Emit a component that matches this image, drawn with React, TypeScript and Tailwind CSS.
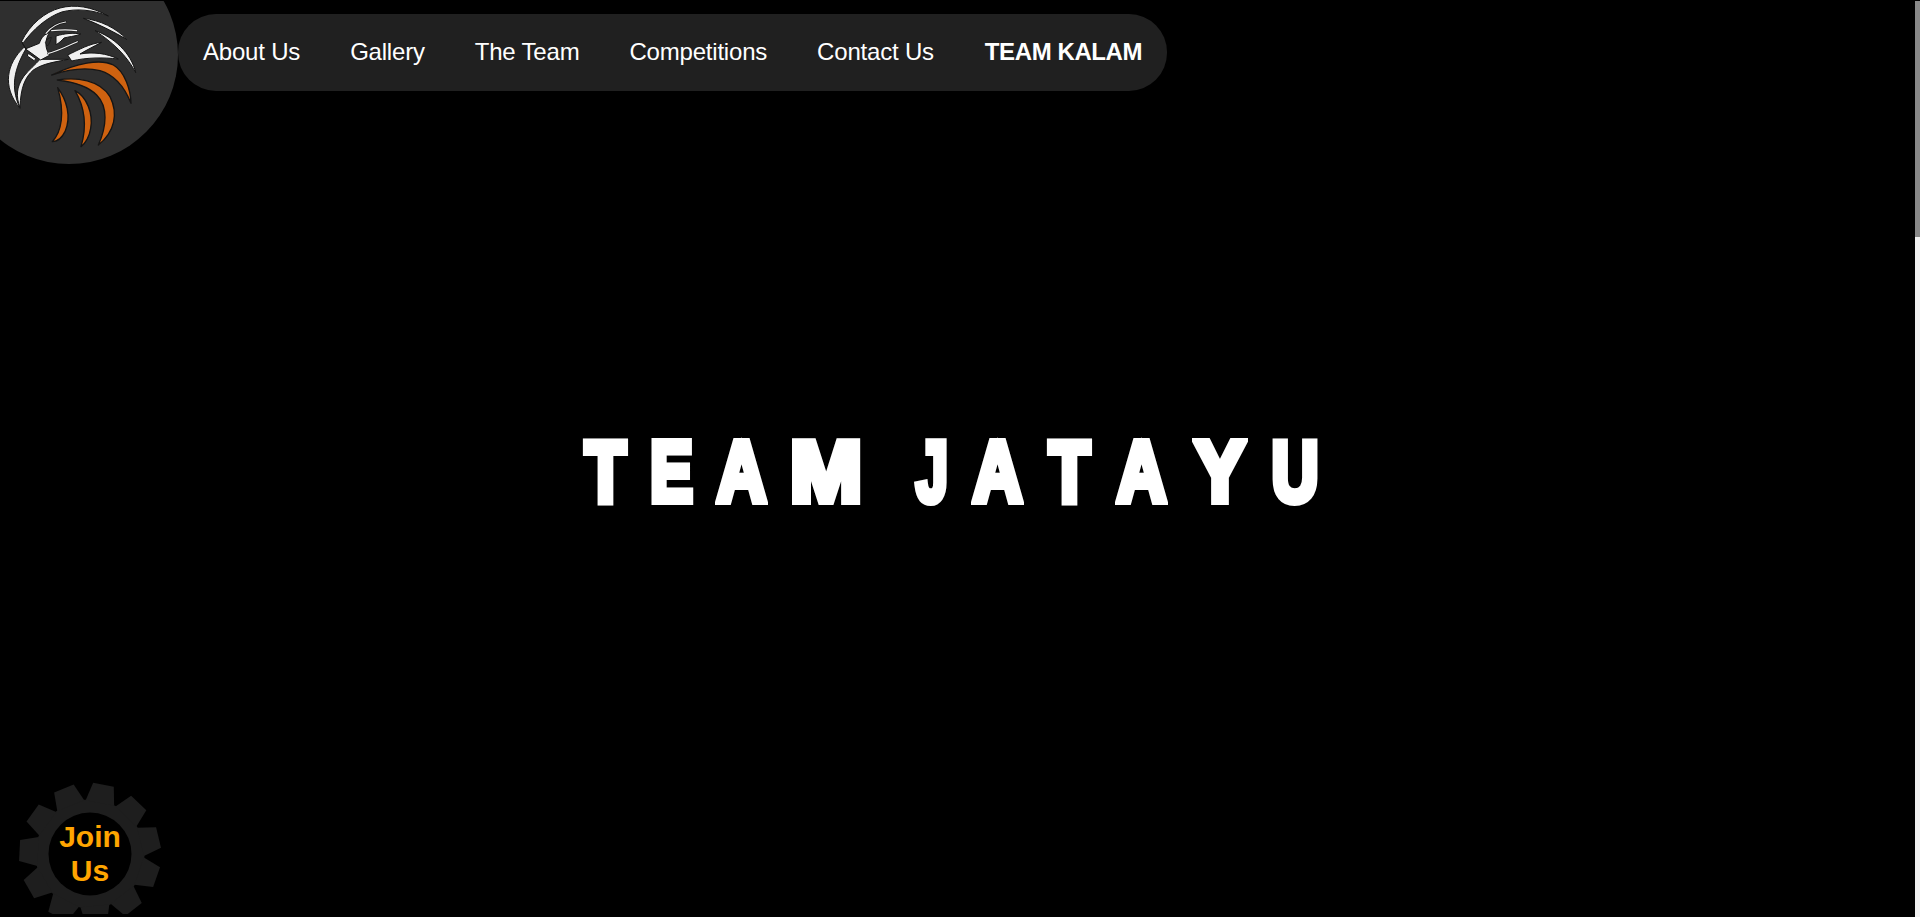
const navLinks = ["About Us", "Gallery", "The Team", "Competitions", "Contact Us"];

const titleLetters = [
  { ch: "T", box: "w-[47px]", scale: "scale-x-[0.77]" },
  { ch: "E", box: "w-[43px]", scale: "scale-x-[0.74]" },
  { ch: "A", box: "w-[55px]", scale: "scale-x-[0.79]" },
  { ch: "M", box: "w-[72px]", scale: "scale-x-[1]" },
  { ch: " ", box: "w-[11px]", scale: "" },
  { ch: "J", box: "w-[34px]", scale: "scale-x-[0.66]" },
  { ch: "A", box: "w-[55px]", scale: "scale-x-[0.79]" },
  { ch: "T", box: "w-[47px]", scale: "scale-x-[0.77]" },
  { ch: "A", box: "w-[55px]", scale: "scale-x-[0.79]" },
  { ch: "Y", box: "w-[60px]", scale: "scale-x-[0.87]" },
  { ch: "U", box: "w-[48px]", scale: "scale-x-[0.75]" },
];

const Logo = () => (
  <svg width="178" height="164" viewBox="0 0 534 492" className="shrink-0">
    <circle cx="207" cy="165" r="327" fill="#2f2f2f" />
    <rect width="534" height="3" fill="#000" />
    <g fill="#cf6210" stroke="#151515" strokeWidth="4" strokeLinejoin="round">
      <path d="M155 225 C230 190 300 175 340 195 C375 215 392 270 393 310 C375 265 345 225 300 212 C250 200 200 210 155 225Z" />
      <path d="M172 240 C230 230 300 240 330 290 C355 340 345 395 295 435 C320 380 325 320 290 285 C260 255 215 245 172 240Z" />
      <path d="M225 272 C260 290 280 340 272 385 C268 410 255 430 243 440 C255 400 265 340 225 272Z" />
      <path d="M173 263 C200 300 215 350 195 395 C185 415 170 425 157 425 C185 395 195 340 173 263Z" />
    </g>
    <g fill="#f0f0f0" stroke="#151515" strokeWidth="3" strokeLinejoin="round">
      <path d="M325 48 C275 20 225 12 180 24 C135 36 90 72 64 126 L70 128 C100 88 140 52 185 36 C230 24 280 30 325 48Z" />
      <path d="M250 55 C300 60 350 85 380 118 C340 95 295 72 250 55Z" />
      <path d="M285 92 C340 110 395 160 407 218 C380 165 335 125 285 92Z" />
      <path d="M72 142 C20 190 5 260 60 325 C38 275 32 225 78 146Z" />
      <path d="M60 323 C48 290 48 262 72 228 C88 208 105 195 120 178 L205 178 C165 186 130 190 100 210 C75 232 62 262 60 323Z" />
      <path d="M66 128 L78 146 L118 130 C124 112 134 102 148 98 C136 116 132 145 150 165 L122 180 C106 168 92 158 78 148Z" />
      <path d="M85 160 L108 176 L102 182 L82 168Z" />
      <path d="M203 165 C235 150 270 130 305 127 C280 140 260 150 240 162 C280 155 320 160 355 177 C310 172 260 172 215 183Z" />
      <path d="M168 108 C195 100 220 98 243 102 C222 110 205 110 192 114 C185 122 176 130 168 134Z" />
    </g>
    <g fill="none" strokeLinecap="round">
      <path d="M138 100 C150 85 170 70 197 66" stroke="#151515" strokeWidth="7" />
      <path d="M138 100 C150 85 170 70 197 66" stroke="#f0f0f0" strokeWidth="3.5" />
      <path d="M155 92 C175 90 200 88 230 92" stroke="#151515" strokeWidth="7" />
      <path d="M155 92 C175 90 200 88 230 92" stroke="#f0f0f0" strokeWidth="3.5" />
      <path d="M145 160 C170 155 200 140 232 125" stroke="#151515" strokeWidth="7" />
      <path d="M145 160 C170 155 200 140 232 125" stroke="#f0f0f0" strokeWidth="3.5" />
    </g>
    <path d="M136 128 C140 118 148 112 154 112 C152 122 148 132 142 138Z" fill="#2f2f2f" stroke="#151515" strokeWidth="2" />
  </svg>
);

// 11 teeth, clipped along the bottom by the svg box
const Gear = () => {
  const teeth = Array.from({ length: 11 }, (_, i) => 11 + (i * 360) / 11);
  return (
    <svg width="148" height="134" viewBox="-74 -74 148 134" className="absolute top-0 left-0">
      <circle r="54.5" fill="#1e1e1e" />
      {teeth.map((deg) => (
        <polygon key={deg} points="-14.5,-52 -10.5,-70.5 10.5,-70.5 14.5,-52" fill="#1e1e1e" transform={`rotate(${deg})`} />
      ))}
      <circle r="41.5" fill="#000" />
    </svg>
  );
};

export default function App() {
  return (
    <div className="relative h-[917px] overflow-hidden bg-black font-['Liberation_Sans',Arial,sans-serif] text-white">
      <section className="flex h-[917px] items-center justify-center pt-[25px] pr-[19px]">
        <h1 className="flex gap-[21px] text-[86px] leading-none font-bold whitespace-pre [-webkit-text-stroke:8px_white]">
          {titleLetters.map((l, i) => (
            <span key={i} className={`flex justify-center ${l.box} ${l.scale}`}>
              {l.ch}
            </span>
          ))}
        </h1>
      </section>

      <header className="absolute top-0 left-0 flex items-start">
        <Logo />
        <nav className="mt-[14px] flex h-[77px] items-center rounded-[38px] bg-[#202020] px-[25px] pb-[2px] text-[24px] tracking-[-0.2px]">
          {navLinks.map((link) => (
            <a key={link} className="mr-[50px] whitespace-nowrap">
              {link}
            </a>
          ))}
          <a className="ml-px font-bold tracking-[-0.4px] whitespace-nowrap">TEAM KALAM</a>
        </nav>
      </header>

      <div className="absolute top-[780px] left-[16px] h-[148px] w-[148px]">
        <Gear />
        <div className="relative flex h-[148px] flex-col items-center justify-center text-[30px] leading-[34px] font-bold text-[#ffa500]">
          <span>Join</span>
          <span>Us</span>
        </div>
      </div>

      {/* scrollbar */}
      <div className="absolute top-0 right-0 flex h-[917px] w-[5px] flex-col bg-[#f1f1f1]">
        <div className="h-px bg-black" />
        <div className="h-[236px] bg-[#888]" />
      </div>
    </div>
  );
}
